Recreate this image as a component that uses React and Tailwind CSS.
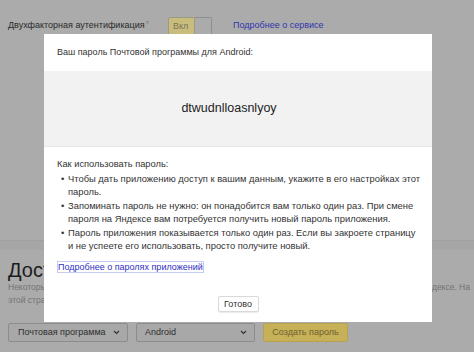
import React from "react";

const Chevron = () => (
  <svg width="7" height="5" viewBox="0 0 7 5" fill="none">
    <path d="M1 1l2.5 2.5L6 1" stroke="#333" strokeWidth="1.2" />
  </svg>
);

const bullets = [
  ["Чтобы дать приложению доступ к вашим данным, укажите в его настройках этот", "пароль."],
  ["Запоминать пароль не нужно: он понадобится вам только один раз. При смене", "пароля на Яндексе вам потребуется получить новый пароль приложения."],
  ["Пароль приложения показывается только один раз. Если вы закроете страницу", "и не успеете его использовать, просто получите новый."],
];

const App = () => {
  return (
    <div className="relative w-[474px] h-[352px] overflow-hidden bg-[#ababab] font-['Liberation_Sans',Arial,sans-serif] text-[#2b2b2b]">
      {/* page under the overlay */}
      <div className="flex items-start pt-[17px] px-[8px]">
        <div className="w-[160px] shrink-0 mt-[2px] text-[9px] leading-[12px] text-[#2a2a2a]">
          Двухфакторная аутентификация
          <sup className="text-[6px] text-[#777] ml-[1px]">?</sup>
        </div>
        <div className="flex h-[20px]">
          <div className="w-[27px] h-full bg-[#c9bd7d] border border-[#9c9a85] rounded-l-[2px] text-[9px] leading-[17px] text-[#7a7358] pl-[4px]">
            Вкл
          </div>
          <div className="w-[17px] h-full bg-[#ababab] border border-l-0 border-[#8e8e8e] rounded-r-[2px]" />
        </div>
        <a className="ml-[21px] mt-[2px] text-[9px] leading-[12px] text-[#3134ad]">Подробнее о сервисе</a>
      </div>

      <div className="h-[203px]" />

      <div className="h-[10px] bg-[#a6a6a6] border-t border-[#a0a0a0]" />

      <div className="pl-[8px] pr-[4px]">
        <h2 className="mt-[9px] text-[20px] leading-[22px] text-[#1c1c1c]">Доступ</h2>
        <div className="text-[8.5px] leading-[13px] text-[#737373]">
          <div className="flex justify-between">
            <span>Некоторые приложения и программы не умеют работать с двухфакторной</span>
            <span>аутентификацией на Яндексе. На</span>
          </div>
          <div>этой странице можно создать пароль для каждого такого приложения.</div>
        </div>
        <div className="mt-[16px] flex gap-[8px]">
          <div className="w-[120px] h-[19px] flex items-center justify-between pl-[9px] pr-[7px] bg-[#a8a8a8] border border-[#8c8c8c] rounded-[2px] text-[9px] text-[#2e2e2e]">
            Почтовая программа
            <Chevron />
          </div>
          <div className="w-[119px] h-[19px] flex items-center justify-between pl-[8px] pr-[7px] bg-[#a8a8a8] border border-[#8c8c8c] rounded-[2px] text-[9px] text-[#2e2e2e]">
            Android
            <Chevron />
          </div>
          <div className="w-[85px] h-[19px] flex items-center justify-center bg-[#c6b058] border border-[#b8a252] rounded-[2px] text-[9px] text-[#6f6232]">
            Создать пароль
          </div>
        </div>
      </div>

      {/* modal */}
      <div className="absolute left-[44px] top-[34px] w-[388px] h-[288px] bg-white flex flex-col">
        <div className="h-[37px] px-[13px] flex items-center text-[9px] text-[#333]">
          Ваш пароль Почтовой программы для Android:
        </div>
        <div className="h-[76px] bg-[#f2f2f2] border-b border-[#e6e6e6] flex items-center justify-center pr-[18px] text-[12.5px] text-[#222]">
          dtwudnlloasnlyoy
        </div>
        <div className="px-[13px] pt-[11px] text-[9.3px] leading-[13.5px] text-[#333]">
          <div>Как использовать пароль:</div>
          {bullets.map((b, i) => (
            <div key={i} className="flex text-[9.4px] whitespace-nowrap">
              <span className="w-[11px] pl-[4px] shrink-0">•</span>
              <span>
                {b[0]}
                <br />
                {b[1]}
              </span>
            </div>
          ))}
          <div className="mt-[8px] leading-[13px] text-[9px]">
            <a className="inline-block leading-[10px] border border-[#c5ccf3] text-[#3030c4]">
              Подробнее о паролях приложений
            </a>
          </div>
          <div className="mt-[22px] flex justify-center">
            <button className="w-[41px] h-[16px] leading-[14px] bg-white border border-[#d9d9d9] rounded-[2px] shadow-[0_1px_1px_rgba(0,0,0,0.08)] text-[9px] text-[#333]">
              Готово
            </button>
          </div>
        </div>
      </div>
    </div>
  );
};

export default App;
